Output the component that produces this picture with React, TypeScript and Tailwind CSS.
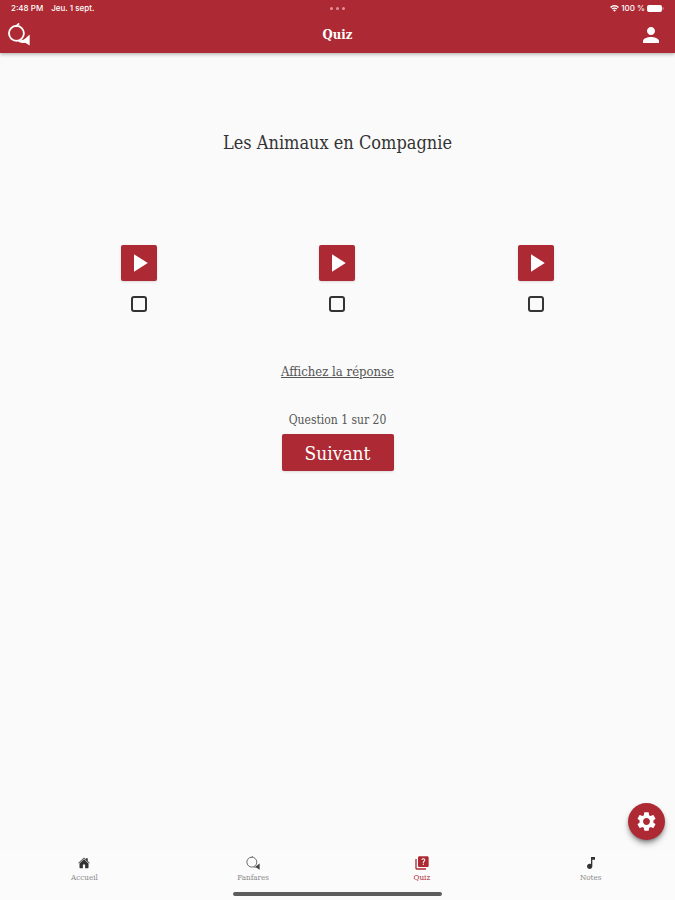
import React from "react";
import { IoHome } from "react-icons/io5";
import {
  MdMusicNote,
  MdPerson,
  MdPlayArrow,
  MdQuiz,
  MdSettings,
} from "react-icons/md";

const sounds = [1, 2, 3];

const HornIcon = ({ className }: { className?: string }) => (
  <svg viewBox="0 0 24 24" className={className} aria-hidden="true">
    <circle cx="8.8" cy="10.8" r="7.8" fill="none" stroke="currentColor" strokeWidth="1.9" />
    <path d="M8 3.8 11.6 0.4" fill="none" stroke="currentColor" strokeWidth="1.8" />
    <path
      d="M9 17.4C13 18.6 16.5 17.8 18.4 16L22.6 12V23.6L18 20.6C14.5 21.2 11 20.6 9 17.4Z"
      fill="currentColor"
    />
  </svg>
);

const HornOutlineIcon = ({ className }: { className?: string }) => (
  <svg viewBox="0 0 24 24" className={className} aria-hidden="true">
    <circle cx="10" cy="10.5" r="8.5" fill="none" stroke="currentColor" strokeWidth="1.3" />
    <path d="M9.5 2.2 11.6 0.4" fill="none" stroke="currentColor" strokeWidth="1.3" />
    <path d="M12 18.8C15 19 16.5 18.2 18 16.6L23.4 13V23.6L18 20.2Z" fill="currentColor" />
  </svg>
);

const StatusBar = () => (
  <div className="grid h-4 grid-cols-3 items-center px-[11px] font-['Inter','Liberation_Sans',sans-serif] text-[8px] leading-none font-medium">
    <div className="flex gap-2">
      <span>2:48 PM</span>
      <span>Jeu. 1 sept.</span>
    </div>
    <div className="flex justify-center gap-[3px]">
      <span className="size-[3px] rounded-full bg-[#e3929b]" />
      <span className="size-[3px] rounded-full bg-[#e3929b]" />
      <span className="size-[3px] rounded-full bg-[#e3929b]" />
    </div>
    <div className="flex items-center justify-end gap-[2px]">
      <svg viewBox="0 0 20 15" className="h-[7px] w-[9px]" aria-hidden="true">
        <path d="M1.2 5.2a12.5 12.5 0 0 1 17.6 0" fill="none" stroke="currentColor" strokeWidth="3.4" />
        <path d="M4.6 8.8a7.6 7.6 0 0 1 10.8 0" fill="none" stroke="currentColor" strokeWidth="3" />
        <path d="M10 14.6 6.8 11.2a4.6 4.6 0 0 1 6.4 0Z" fill="currentColor" />
      </svg>
      <span>100 %</span>
      <svg viewBox="0 0 17 7" className="h-[7px] w-[17px]" aria-hidden="true">
        <rect width="15" height="7" rx="2" fill="currentColor" />
        <path d="M16 2.4v2.2" stroke="currentColor" strokeWidth="1" opacity="0.6" />
      </svg>
    </div>
  </div>
);

const Header = () => (
  <header className="bg-[#ad2a34] text-white shadow-[0_1px_4px_rgba(0,0,0,0.35)]">
    <StatusBar />
    <div className="grid h-[37px] grid-cols-3 items-center px-2">
      <a href="#accueil" aria-label="Accueil" className="w-fit">
        <HornIcon className="size-[23px]" />
      </a>
      <h1 className="text-center text-[13px] leading-5 font-bold">Quiz</h1>
      <button type="button" aria-label="Profil" className="mr-1 justify-self-end">
        <MdPerson className="size-6" />
      </button>
    </div>
  </header>
);

const SoundCard = ({ id }: { id: number }) => (
  <div className="flex flex-col items-center gap-[15px]">
    <button
      type="button"
      aria-label={`Écouter ${id}`}
      className="flex size-9 items-center justify-center rounded-xs bg-[#ad2a34] text-white shadow-sm"
    >
      <MdPlayArrow className="size-[30px]" />
    </button>
    <input
      type="checkbox"
      aria-label={`Choix ${id}`}
      className="size-4 appearance-none rounded-[3px] border-2 border-[#333] checked:bg-[#ad2a34]"
    />
  </div>
);

const BottomNav = () => (
  <nav className="bg-[#fbfbfb] pt-1">
    <div className="grid grid-cols-4 text-[8px] leading-3 text-[#8a8a8a]">
      <a href="#accueil" className="flex flex-col items-center gap-[1px]">
        <IoHome className="size-4 p-[2px] text-[#333]" />
        Accueil
      </a>
      <a href="#fanfares" className="flex flex-col items-center gap-[1px]">
        <HornOutlineIcon className="size-4 p-[1px] text-[#444]" />
        Fanfares
      </a>
      <a href="#quiz" className="flex flex-col items-center gap-[1px] text-[#ad2a34]">
        <MdQuiz className="size-4" />
        Quiz
      </a>
      <a href="#notes" className="flex flex-col items-center gap-[1px]">
        <MdMusicNote className="size-4 text-[#333]" />
        Notes
      </a>
    </div>
    <div className="mx-auto mt-2 mb-1 h-1 w-[31%] rounded-full bg-[#5c5c5c]" />
  </nav>
);

const App = () => {
  return (
    <div className="relative flex min-h-screen flex-col bg-[#fafafa] font-['DejaVu_Serif_Condensed','DejaVu_Serif',serif] text-[#333]">
      <Header />
      <main className="flex flex-1 flex-col items-center pt-[76px]">
        <h2 className="text-lg leading-7">Les Animaux en Compagnie</h2>
        <div className="mt-[88px] grid w-full grid-cols-3 px-10">
          {sounds.map((id) => (
            <SoundCard key={id} id={id} />
          ))}
        </div>
        <button type="button" className="mt-[50px] text-[13px] leading-5 text-[#555] underline">
          Affichez la réponse
        </button>
        <p className="mt-7 text-xs leading-5 text-[#555]">Question 1 sur 20</p>
        <button
          type="button"
          className="mt-1 h-[37px] w-28 rounded-xs bg-[#ad2a34] text-[19px] leading-7 text-white shadow-sm"
        >
          Suivant
        </button>
      </main>
      <BottomNav />
      <button
        type="button"
        aria-label="Réglages"
        className="absolute right-[10px] bottom-[60px] flex size-[37px] items-center justify-center rounded-full bg-[#ad2a34] text-white shadow-md shadow-black/40"
      >
        <MdSettings className="size-[23px]" />
      </button>
    </div>
  );
};

export default App;
